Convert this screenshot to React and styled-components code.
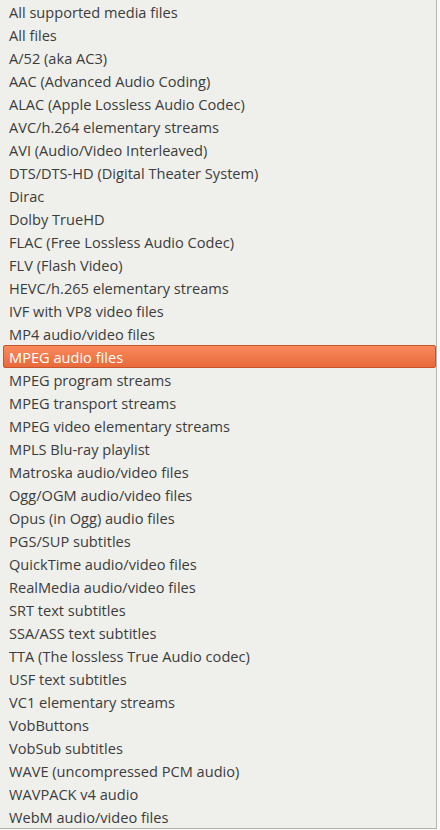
import styled, { createGlobalStyle } from 'styled-components'

const GlobalStyle = createGlobalStyle`
	html, body {
		margin: 0;
		padding: 0;
		background: #f7f7f6;
	}
	body {
		font-family: 'Open Sans', 'DejaVu Sans', sans-serif;
	}
`

const Screen = styled.div`
	width: 440px;
	height: 830px;
	display: flex;
	overflow: hidden;
`

const Menu = styled.ul`
	list-style: none;
	margin: 0;
	padding: 0;
	width: 436px;
	height: 828px;
	background: #eff0ec;
	border-right: 1px solid #b9b4b2;
	border-bottom: 1px solid #b3b1ae;
	display: flex;
	flex-direction: column;
`

const Item = styled.li`
	height: 23px;
	flex: none;
	box-sizing: border-box;
	display: flex;
	align-items: center;
	padding-left: ${(p) => (p.$active ? '5px' : '9px')};
	margin: ${(p) => (p.$active ? '0 0 0 3px' : '0')};
	font-size: 14.6px;
	color: ${(p) => (p.$active ? '#ffffff' : '#3c3c3c')};
	background: ${(p) =>
		p.$active ? 'linear-gradient(to bottom, #f88a5c, #e9693a)' : 'transparent'};
	border: ${(p) => (p.$active ? '1px solid #c8542b' : 'none')};
	border-radius: ${(p) => (p.$active ? '2px' : '0')};
	white-space: nowrap;
`

const Gap = styled.div`
	width: 3px;
	background: #fafafa;
`

const formats = [
	'All supported media files',
	'All files',
	'A/52 (aka AC3)',
	'AAC (Advanced Audio Coding)',
	'ALAC (Apple Lossless Audio Codec)',
	'AVC/h.264 elementary streams',
	'AVI (Audio/Video Interleaved)',
	'DTS/DTS-HD (Digital Theater System)',
	'Dirac',
	'Dolby TrueHD',
	'FLAC (Free Lossless Audio Codec)',
	'FLV (Flash Video)',
	'HEVC/h.265 elementary streams',
	'IVF with VP8 video files',
	'MP4 audio/video files',
	'MPEG audio files',
	'MPEG program streams',
	'MPEG transport streams',
	'MPEG video elementary streams',
	'MPLS Blu-ray playlist',
	'Matroska audio/video files',
	'Ogg/OGM audio/video files',
	'Opus (in Ogg) audio files',
	'PGS/SUP subtitles',
	'QuickTime audio/video files',
	'RealMedia audio/video files',
	'SRT text subtitles',
	'SSA/ASS text subtitles',
	'TTA (The lossless True Audio codec)',
	'USF text subtitles',
	'VC1 elementary streams',
	'VobButtons',
	'VobSub subtitles',
	'WAVE (uncompressed PCM audio)',
	'WAVPACK v4 audio',
	'WebM audio/video files',
]

export default function App() {
	return (
		<>
			<GlobalStyle />
			<Screen>
				<Menu>
					{formats.map((f) => (
						<Item key={f} $active={f === 'MPEG audio files'}>
							{f}
						</Item>
					))}
				</Menu>
				<Gap />
			</Screen>
		</>
	)
}
